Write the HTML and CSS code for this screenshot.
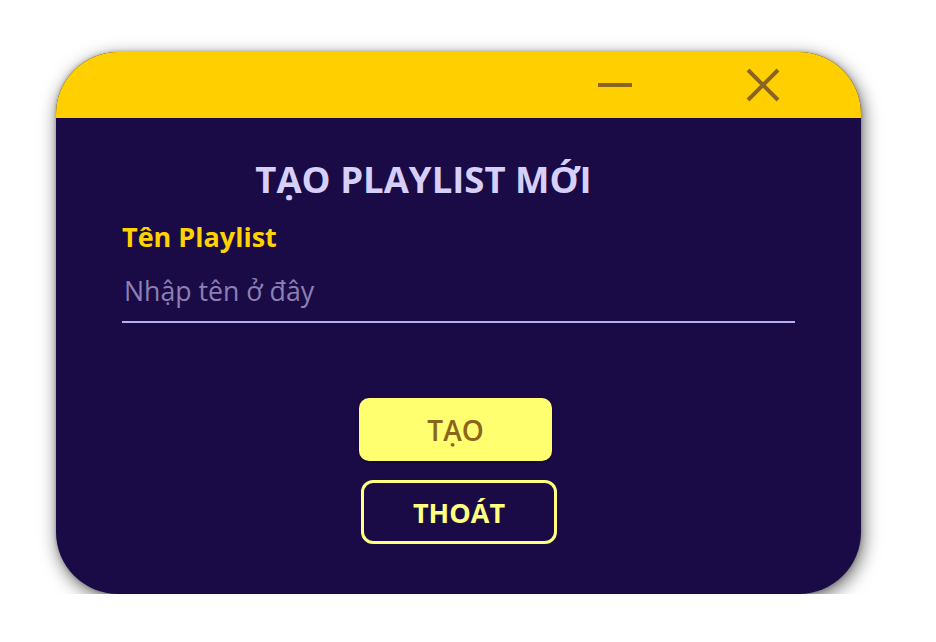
FILE: index.html
```html
<!DOCTYPE html>
<html lang="vi">
<head>
<meta charset="utf-8">
<title>Tạo playlist mới</title>
<link rel="stylesheet" href="styles.css">
</head>
<body>
<div class="stage">
  <div class="window">
    <div class="titlebar">
      <button class="tb-btn tb-min" aria-label="Thu nhỏ">
        <svg width="36" height="6" viewBox="0 0 36 6"><line x1="1" y1="3" x2="35" y2="3" stroke="#8a6420" stroke-width="4"/></svg>
      </button>
      <button class="tb-btn tb-close" aria-label="Đóng">
        <svg width="36" height="36" viewBox="0 0 36 36"><path d="M3 3 L33 33 M33 3 L3 33" stroke="#8a6420" stroke-width="4" fill="none"/></svg>
      </button>
    </div>
    <div class="content">
      <h1 class="heading">TẠO PLAYLIST MỚI</h1>
      <label class="label" for="name">Tên Playlist</label>
      <input class="field" id="name" type="text" placeholder="Nhập tên ở đây">
      <div class="actions">
        <button class="btn btn-primary">TẠO</button>
        <button class="btn btn-outline">THOÁT</button>
      </div>
    </div>
  </div>
</div>
</body>
</html>
```

FILE: styles.css
```css
* { box-sizing: border-box; }
html, body { margin: 0; padding: 0; background: #ffffff; }
body { font-family: "Open Sans", "Noto Sans", sans-serif; }
.stage {
  padding: 52px 0 0 56px;
}
.window {
  width: 805px;
  height: 542px;
  background: #1a0b47;
  border-radius: 62px;
  overflow: hidden;
  box-shadow: 2px 5px 18px rgba(0,0,0,0.6), 0 0 4px rgba(0,0,0,0.25);
  display: flex;
  flex-direction: column;
}
.titlebar {
  height: 66px;
  background: #ffcf00;
  display: flex;
  align-items: center;
  justify-content: flex-end;
  padding-right: 80px;
  flex-shrink: 0;
}
.tb-btn {
  background: none;
  border: 0;
  padding: 0;
  display: flex;
  align-items: center;
  justify-content: center;
}
.tb-min { margin-right: 112px; }
.content {
  padding: 0 66px;
  display: flex;
  flex-direction: column;
}
.heading {
  margin: 38px 70px 0 0;
  text-align: center;
  font-size: 36.5px;
  font-weight: 700;
  line-height: 46px;
  color: #d6cff8;
}
.label {
  margin-top: 18px;
  font-size: 27px;
  font-weight: 700;
  line-height: 34px;
  color: #ffd200;
}
.field {
  margin-top: 18px;
  background: transparent;
  border: 0;
  border-bottom: 2px solid #b5aef0;
  font-family: inherit;
  font-size: 26.7px;
  color: #ffffff;
  padding: 0 0 12px 2px;
  outline: none;
  width: 100%;
}
.field::placeholder { color: #8a80b4; }
.actions {
  margin-top: 75px;
  display: flex;
  flex-direction: column;
  align-items: center;
  gap: 19px;
}
.btn {
  font-family: inherit;
  font-size: 28px;
  font-weight: 600;
  border-radius: 10px;
  height: 63px;
  cursor: pointer;
}
.btn-primary {
  width: 193px;
  background: #ffff70;
  border: 0;
  color: #8b651c;
  margin-right: 6px;
  box-shadow: 0 1px 3px rgba(0,0,0,0.4);
}
.btn-outline {
  width: 196px;
  height: 64px;
  background: transparent;
  border: 3px solid #ffff80;
  border-radius: 12px;
  color: #ffff80;
  font-weight: 700;
  font-size: 27px;
  margin-left: 1px;
}
```
